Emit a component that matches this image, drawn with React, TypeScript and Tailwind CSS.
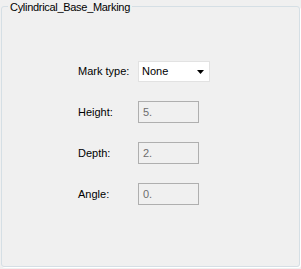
import React from "react";

const font = { fontFamily: '"Liberation Sans", Arial, sans-serif' };

function Row({ label, children }: { label: string; children: React.ReactNode }) {
  return (
    <div className="flex items-center">
      <div className="w-[60px] text-[11px] text-black leading-none">{label}</div>
      {children}
    </div>
  );
}

function DisabledInput({ value }: { value: string }) {
  return (
    <div className="w-[61px] h-[22px] border border-[#afafaf] bg-[#f0f0f0] flex items-center pl-[4px] text-[11px] text-[#6d6d6d] leading-none">
      {value}
    </div>
  );
}

export default function App() {
  return (
    <div className="w-[301px] h-[269px] bg-[#f0f0f0] pt-[6px] pl-[1px]" style={font}>
      <div className="relative w-[299px] h-[261px] rounded-[3px] border border-[#d5dfe5] shadow-[1px_1px_0_#ffffff]">
        <div className="absolute left-[6px] top-[-6px] px-[2px] bg-[#f0f0f0] text-[11px] leading-[12px] tracking-[-0.3px] text-black">
          Cylindrical_Base_Marking
        </div>
        <div className="flex flex-col gap-[19px] pl-[76px] pt-[54px]">
          <Row label="Mark type:">
            <div className="w-[72px] h-[21px] border border-[#e2e2e2] bg-white flex items-center justify-between pl-[3px] pr-[5px] text-[11px] text-black leading-none">
              <span>None</span>
              <svg width="7" height="4" viewBox="0 0 7 4">
                <polygon points="0,0 7,0 3.5,4" fill="#000" />
              </svg>
            </div>
          </Row>
          <Row label="Height:">
            <DisabledInput value="5." />
          </Row>
          <Row label="Depth:">
            <DisabledInput value="2." />
          </Row>
          <Row label="Angle:">
            <DisabledInput value="0." />
          </Row>
        </div>
      </div>
    </div>
  );
}
